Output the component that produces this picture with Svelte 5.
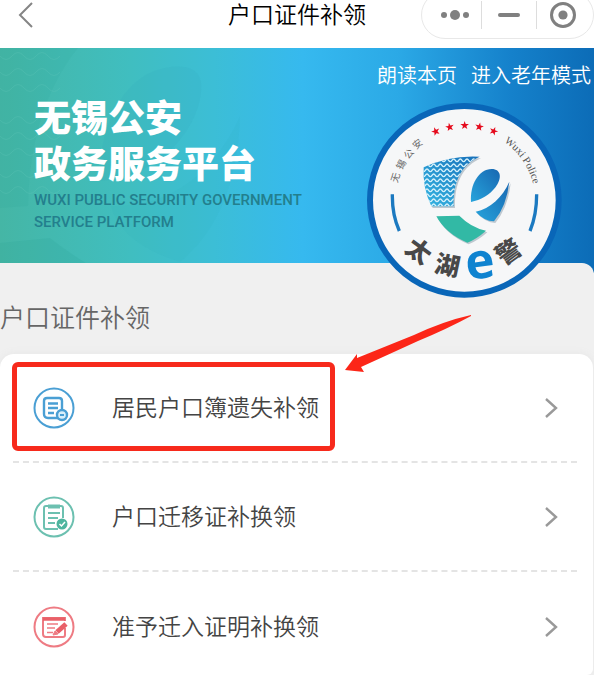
<script>
  const services = [
    { label: '居民户口簿遗失补领', icon: 'register', color: '#4a9fd4' },
    { label: '户口迁移证补换领', icon: 'transfer', color: '#6cc0b0' },
    { label: '准予迁入证明补换领', icon: 'permit', color: '#ee7b83' }
  ];
  const stars = [[227, 109], [269, 96], [314, 91], [358, 95], [401, 108]];
  const sealName = [
    { c: '无', x: 107, y: 248, r: -72 },
    { c: '锡', x: 124, y: 209, r: -60 },
    { c: '公', x: 147, y: 177, r: -49 },
    { c: '安', x: 173, y: 147, r: -40 }
  ];
  const brand = [
    { c: '太', x: 176, y: 468, r: 36 },
    { c: '湖', x: 262, y: 511, r: 12 },
    { c: '警', x: 445, y: 470, r: -36 }
  ];
  const waves = Array.from({ length: 10 }, (_, i) => 196 + i * 15);
  const bigWaves = [8, 24, 40, 72, 88, 104, 126, 142];
  const wave = (x, y, step, n, h) => {
    let d = `M${x} ${y}`;
    for (let i = 0; i < n; i++) d += `q${step / 2} ${i % 2 ? -h : h} ${step} 0`;
    return d;
  };
</script>

<div class="app">
  <header>
    <button class="back" aria-label="返回">
      <svg width="16" height="28" viewBox="0 0 16 28"><path d="M14 2 2 14l12 12" fill="none" stroke="#858585" stroke-width="2" /></svg>
    </button>
    <h1>户口证件补领</h1>
    <div class="capsule">
      <button aria-label="更多">
        <svg width="30" height="12" viewBox="0 0 30 12" fill="#808080"><circle cx="4" cy="6" r="3" /><circle cx="15" cy="6" r="5" /><circle cx="26" cy="6" r="3" /></svg>
      </button>
      <button aria-label="最小化">
        <svg width="22" height="6" viewBox="0 0 22 6"><rect y="1" width="22" height="4" rx="2" fill="#808080" /></svg>
      </button>
      <button aria-label="关闭">
        <svg width="28" height="28" viewBox="0 0 28 28"><circle cx="14" cy="14" r="11.5" fill="none" stroke="#808080" stroke-width="3" /><circle cx="14" cy="14" r="4.6" fill="#808080" /></svg>
      </button>
    </div>
  </header>

  <section class="banner">
    <svg class="watermark" width="340" height="215" viewBox="0 0 340 215" aria-hidden="true">
      <path d="M0 0H78Q30 60 28 158L0 160Z" fill="#249c8c" opacity=".09" />
      <path d="M0 195 50 190Q68 204 86 215H0Z" fill="#249c8c" opacity=".14" />
      <path d="M100 133C98 85 120 28 165 20Q197 14 201 34C205 72 164 130 100 133Z" fill="#2ba4b8" opacity=".13" />
      <path d="M240 68C238 145 210 190 180 214Q120 195 111 158C165 160 212 130 240 68Z" fill="#2ba4b8" opacity=".08" />
      {#each bigWaves as y}
        <path d={wave(0, y, 12, 5, 7)} fill="none" stroke="#6ccdbd" opacity=".22" />
      {/each}
    </svg>
    <nav>
      <a href="#read">朗读本页</a>
      <a href="#senior">进入老年模式</a>
    </nav>
    <div class="slogan">
      <h2>无锡公安<br />政务服务平台</h2>
      <p>WUXI PUBLIC SECURITY GOVERNMENT<br />SERVICE PLATFORM</p>
    </div>
    <svg class="seal" viewBox="0 0 630 630" role="img" aria-label="太湖e警">
      <defs>
        <linearGradient id="shield" x1="0" y1="1" x2="1" y2="0"><stop offset="0" stop-color="#35b5e2" /><stop offset="1" stop-color="#176fb9" /></linearGradient>
        <linearGradient id="eye" x1="0" y1="1" x2="1" y2="0"><stop offset="0" stop-color="#27a4dc" /><stop offset="1" stop-color="#1767b1" /></linearGradient>
        <path id="police-arc" d="M313 104A212 212 0 0 1 525 316" />
        <path id="star" d="M0-13 3-4 13-4 5 2 8 11 0 6-8 11-5 2-13-4-3-4Z" />
        <clipPath id="shield-clip"><path d="M191 217Q270 180 359 185C307 207 279 255 281 334L214 334Q187 277 191 217Z" /></clipPath>
      </defs>
      <circle cx="313" cy="316" r="283" fill="#f6f7f8" stroke="#0966b8" stroke-width="18" />
      {#each stars as [x, y], i}
        <use href="#star" transform={`translate(${x} ${y}) rotate(${(i - 2) * 11})`} fill="#e50a1c" />
      {/each}
      {#each sealName as g}
        <text class="tiny" transform={`translate(${g.x} ${g.y}) rotate(${g.r})`} text-anchor="middle" dy="10">{g.c}</text>
      {/each}
      <text class="police"><textPath href="#police-arc" startOffset="126">Wuxi Police</textPath></text>
      <path d="M97 298Q96 360 118 408M530 298Q530 360 510 408" fill="none" stroke="#1b79c0" stroke-width="10" />
      <g fill="#bec8d0" transform="translate(4 5)">
        <path d="M191 217Q270 180 359 185C307 207 279 255 281 334L214 334Q187 277 191 217Z" />
        <path d="M229 364 298 362Q332 397 378 407 350 432 322 443 257 416 229 364Z" />
        <path d="M448 260Q440 333 402 379 372 378 347 350C391 341 427 307 448 260Z" />
      </g>
      <path d="M191 217Q270 180 359 185C307 207 279 255 281 334L214 334Q187 277 191 217Z" fill="url(#shield)" />
      <g clip-path="url(#shield-clip)" fill="none" stroke="#d5f1fb" stroke-width="4">
        {#each waves as y}
          <path d={wave(186, y, 10, 18, 8)} />
        {/each}
      </g>
      <path d="M229 364 298 362Q332 397 378 407 350 432 322 443 257 416 229 364Z" fill="#32b9a5" />
      <path d="M333 321C329 270 356 222 395 222 424 222 426 250 407 276 389 300 362 315 333 321Z" fill="url(#eye)" />
      <path d="M448 260Q440 333 402 379 372 378 347 350C391 341 427 307 448 260Z" fill="url(#eye)" />
      {#each brand as g}
        <text class="brand" transform={`translate(${g.x} ${g.y}) rotate(${g.r})`} text-anchor="middle" dy="27">{g.c}</text>
      {/each}
      <text class="letter" transform="translate(360 510) rotate(-8)" text-anchor="middle" dy="40">e</text>
    </svg>
  </section>

  <main>
    <h3>户口证件补领</h3>
    <ul>
      {#each services as s, i}
        <li>
          <a href={`#${s.icon}`}>
            <svg class="icon" viewBox="0 0 42 42" fill="none" stroke={s.color} stroke-width="2">
              <circle cx="21" cy="21" r="19.5" />
              {#if s.icon === 'register'}
                <path d="M25 31H15Q11 31 11 27V14Q11 11 14 11H26Q29 11 29 14V23M15 16.500H25M15 21H25M15 26H21" stroke-width="2.400" />
                <circle cx="29" cy="28" r="5" fill="#d9effa" stroke-width="2.400" /><path d="M27 28h4" />
              {:else if s.icon === 'transfer'}
                <path d="M25 33H13Q11 33 11 31V12Q11 10 13 10H28Q30 10 30 12V22M15 17H27M15 22H25M15 27H22" stroke-width="2" />
                <path d="M15 10.500H27" stroke-width="4" /><circle cx="29" cy="28" r="5.500" fill="#4db59f" stroke="none" /><path d="m26.500 28 2 2 3.500-4" stroke="#fff" stroke-width="1.500" />
              {:else}
                <path d="M32 22V29Q32 31 30 31H13Q10 31 10 28V12H32V15" />
                <path d="M10 13H32" stroke-width="3.500" stroke="#e96068" /><path d="M14 18H25M14 22H22M14 26.500H20" stroke-width="1.600" />
                <path d="m24 26 9-8" stroke-width="5" stroke="#e96068" /><path d="m20 29 2-4 3 3Z" fill={s.color} stroke-width="1" />
              {/if}
            </svg>
            <span>{s.label}</span>
            <svg class="chevron" viewBox="0 0 14 22"><path d="m2 2 10 9-10 9" fill="none" stroke="#999" stroke-width="2.400" /></svg>
          </a>
          {#if i === 0}<i class="marker"></i>{/if}
        </li>
      {/each}
    </ul>
    <svg class="arrow" width="128" height="58" viewBox="0 0 128 58" aria-hidden="true">
      <path d="M127 0Q100 6 70 20L13 43 13 39 1 55 20 57 17 52 74 26Q103 14 127 1Z" fill="#fc2618" />
    </svg>
  </main>
</div>

<style>
  :global(body) { margin: 0; background: #fff; }
  .app { font-family: "Liberation Sans", "Noto Sans CJK SC", sans-serif; overflow: hidden; color: #444; }
  h1, h2, h3, p, ul { margin: 0; padding: 0; }
  svg { display: block; }
  a { color: inherit; text-decoration: none; }
  button { border: 0; padding: 0; background: none; display: flex; align-items: center; justify-content: center; }
  header { box-sizing: border-box; height: 48px; padding-bottom: 18px; display: grid; grid-template-columns: 1fr auto 1fr; align-items: center; background: #fff; }
  .back { justify-self: start; margin-left: 18px; }
  h1 { font-size: 23px; line-height: 30px; font-weight: 350; color: #000; }
  .capsule { justify-self: end; box-sizing: border-box; width: 173px; height: 48px; margin: -9px 0; border: 1px solid #e8e8e8; border-radius: 24px; display: flex; align-items: center; padding: 0 3px 0 6px; }
  .capsule button { flex: 1; height: 28px; }
  .capsule button + button { border-left: 1px solid #ddd; }
  .banner { position: relative; height: 225px; background: linear-gradient(90deg, #45b6a5 0, #40bec0 22%, #3cbed6 36%, #36b9ef 51%, #2ba9e6 67%, #1581cb 86%, #0c6cb7 100%); }
  .watermark { position: absolute; left: 0; top: 0; }
  nav { position: relative; display: flex; justify-content: flex-end; gap: 14px; padding: 13px 3px 0 0; font-size: 20px; line-height: 30px; font-weight: 350; color: #fff; }
  .slogan { position: relative; padding: 6px 0 0 34px; }
  h2 { font-size: 37px; line-height: 46px; font-weight: 900; color: #fff; }
  p { font-family: Roboto, sans-serif; font-size: 15px; line-height: 22px; font-weight: 500; color: #237f8d; }
  .seal { position: absolute; z-index: 2; top: 47px; right: 24px; width: 210px; height: 210px; }
  .tiny { font-size: 29px; fill: #666; }
  .police { font-family: "Liberation Serif", serif; font-size: 32px; fill: #555; }
  .brand { font-size: 74px; font-weight: 900; fill: #484848; }
  .letter { font-family: "Open Sans", sans-serif; font-size: 148px; font-weight: 700; fill: #0f83d0; }
  main { position: relative; margin-top: -10px; padding-top: 35px; border-radius: 0 12px 0 0; background: #f0f0f0; }
  h3 { font-size: 25px; line-height: 40px; font-weight: 350; color: #666; }
  ul { list-style: none; margin: 16px 1px 0 0; border-radius: 14px 14px 6px 0; background: #fff; box-shadow: 0 0 8px #e6e6e6; }
  li { position: relative; padding: 0 16px 0 13px; }
  li a { display: flex; align-items: center; height: 107px; padding: 0 19px 0 20px; border-bottom: 2px dashed #e4e4e4; }
  li:last-child a { height: 96px; padding-top: 7px; border-bottom: 0; }
  .icon { width: 42px; height: 42px; }
  span { flex: 1; margin-left: 37px; font-size: 23px; line-height: 34px; font-weight: 350; }
  .chevron { width: 14px; height: 22px; }
  .marker { position: absolute; left: 12px; top: 8px; box-sizing: border-box; width: 323px; height: 89px; border: 5px solid #f72a1c; border-radius: 6px; }
  .arrow { position: absolute; left: 344px; top: 52px; }
</style>
